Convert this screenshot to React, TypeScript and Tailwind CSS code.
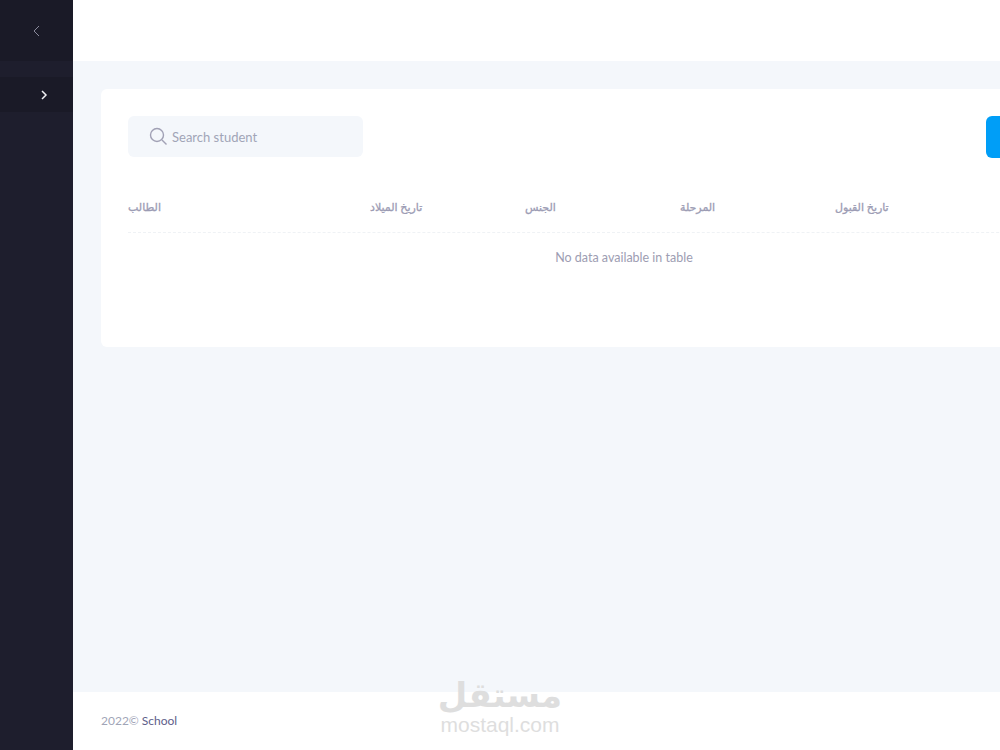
const font = { fontFamily: 'Lato, "DejaVu Sans", sans-serif' };

const columns = [
  { label: "الطالب", width: "w-[242px]" },
  { label: "تاريخ الميلاد", width: "w-[155px]" },
  { label: "الجنس", width: "w-[155px]" },
  { label: "المرحلة", width: "w-[155px]" },
  { label: "تاريخ القبول", width: "w-[155px]" },
];

export default function App() {
  return (
    <div className="relative flex h-[750px] w-[1000px] overflow-hidden bg-[#f4f7fb]" style={font}>
      <aside className="flex h-full w-[73px] shrink-0 flex-col bg-[#1e1e2d]">
        <div className="flex h-[61px] items-center justify-end bg-[#1a1a27] pr-[31px]">
          <svg width="10" height="14" viewBox="0 0 10 14" fill="none" stroke="#8a8a9c" strokeWidth="1">
            <path d="M7 2 L2 7 L7 12" />
          </svg>
        </div>
        <div className="h-[16px] bg-[#1e1e2d]" />
        <div className="flex h-[35px] items-center justify-end bg-[#1a1a27] pr-[25px]">
          <svg width="8" height="10" viewBox="0 0 8 10" fill="none" stroke="#f1f1f4" strokeWidth="1.5">
            <path d="M2 1 L6 5 L2 9" />
          </svg>
        </div>
      </aside>
      <main className="flex min-w-0 flex-1 flex-col">
        <header className="h-[61px] shrink-0 bg-white" />
        <section className="flex-1 px-[28px] pt-[28px]">
          <div className="h-[258px] w-[1000px] rounded-[6px] bg-white px-[27px] pt-[27px]">
            <div className="flex items-start">
              <div className="flex h-[41px] w-[235px] shrink-0 items-center rounded-[6px] bg-[#f4f7fb] pl-[21px]">
                <svg width="19" height="19" viewBox="0 0 19 19" fill="none" stroke="#a1a1b5" strokeWidth="1.4">
                  <circle cx="8" cy="8" r="6.5" />
                  <path d="M13 13 L17.5 17.5" />
                </svg>
                <span className="ml-[4px] pt-[2px] text-[13px] text-[#a1a5b7]">Search student</span>
              </div>
              <div className="ml-[623px] h-[42px] w-[100px] shrink-0 rounded-[6px] bg-[#009ef7]" />
            </div>
            <div className="mt-[27px] flex h-[48px] items-center border-b border-dashed border-[#eff2f5] pb-[2px] text-[11px] font-normal text-[#9c9cb4] [-webkit-text-stroke:0.3px_#9c9cb4]">
              {columns.map((c) => (
                <div key={c.label} className={c.width}>
                  <span dir="rtl">{c.label}</span>
                </div>
              ))}
            </div>
            <div className="flex w-[992px] justify-center pt-[15px]">
              <span className="text-[12.5px] leading-[20px] text-[#9d9db2]">No data available in table</span>
            </div>
          </div>
        </section>
        <footer className="flex h-[58px] shrink-0 items-center bg-white pl-[28px] text-[12px] text-[#a1a5b7]">
          <span>2022©</span>
          <span className="ml-[3px] text-[#5e5e8a]">School</span>
        </footer>
      </main>
      <div className="absolute left-[438px] top-[675px] flex w-[124px] flex-col items-center leading-none text-[#dedede]">
        <span dir="rtl" className="text-[34px] font-bold leading-[40px]" style={{ fontFamily: '"DejaVu Sans", sans-serif' }}>مستقل</span>
        <span className="text-[21px] leading-[20px]" style={{ fontFamily: '"Liberation Sans", sans-serif' }}>mostaql.com</span>
      </div>
    </div>
  );
}
